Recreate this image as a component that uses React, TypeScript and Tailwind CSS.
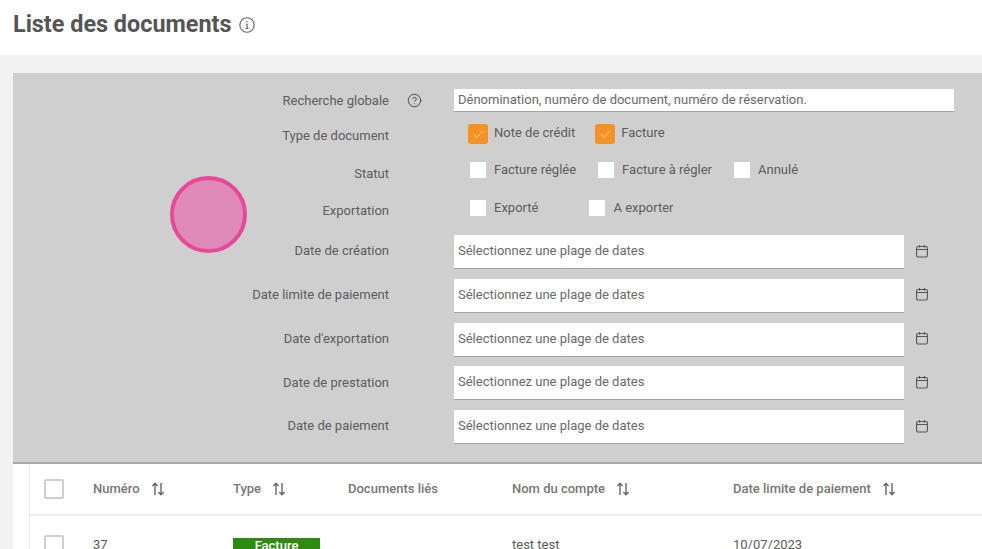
import { CircleHelp, Check } from "lucide-react";

const DATE_ROWS = [
  "Date de création",
  "Date limite de paiement",
  "Date d'exportation",
  "Date de prestation",
  "Date de paiement",
];

function SortIcon() {
  return (
    <svg width="14" height="14" viewBox="0 0 14 14" fill="none" stroke="#666" strokeWidth="1.4">
      <path d="M4 13V1.5M1.4 4L4 1.3 6.6 4" />
      <path d="M10 1v11.5M7.4 10L10 12.7 12.6 10" />
    </svg>
  );
}

function CalIcon() {
  return (
    <svg width="12" height="14" viewBox="0 0 12 14" fill="none" stroke="#555" strokeWidth="1.1" className="ml-[12px] -mt-[3px]">
      <rect x="0.6" y="2.5" width="10.8" height="10.5" rx="1.5" />
      <path d="M0.6 5.5h10.8M3.5 1v2.5M8.5 1v2.5" />
    </svg>
  );
}

function InfoIcon() {
  return (
    <svg width="16" height="16" viewBox="0 0 16 16" fill="none" stroke="#666" strokeWidth="1.1" className="ml-2">
      <circle cx="8" cy="8" r="7.2" />
      <path d="M6.8 7.2H8.1V11.4M6.7 11.4H9.4" />
      <path d="M7.4 4.6h1.2" strokeWidth="1.4" />
    </svg>
  );
}

function Orange({ label, className }: { label: string; className?: string }) {
  return (
    <div className={"flex items-center " + (className ?? "")}>
      <span className="w-5 h-5 rounded-[3px] bg-[#f39325] flex items-center justify-center mr-[6px]">
        <Check size={13} strokeWidth={1} color="#ffffff" />
      </span>
      <span className="-mt-[2px]">{label}</span>
    </div>
  );
}

function Box({ label, className }: { label: string; className?: string }) {
  return (
    <div className={"flex items-center " + (className ?? "")}>
      <span className="w-4 h-4 bg-white mr-2" />
      <span>{label}</span>
    </div>
  );
}

function FieldLabel({ children, className }: { children: string; className?: string }) {
  return <div className={"w-[376px] shrink-0 text-right text-[13px] text-[#5c5c5c] " + (className ?? "")}>{children}</div>;
}

function Th({ label, w, sort }: { label: string; w: string; sort?: boolean }) {
  return (
    <div className={"flex items-center shrink-0 font-medium text-[13px] text-[#777] " + w}>
      {label}
      {sort && <span className="ml-[11px] flex"><SortIcon /></span>}
    </div>
  );
}

export default function App() {
  return (
    <div className="h-[549px] w-[982px] overflow-hidden bg-[#f2f2f2] font-['Roboto',sans-serif] relative">
      <header className="h-[55px] bg-white flex items-center pl-[13px] pb-[6px]">
        <h1 className="text-[23.4px] font-bold text-[#555]">Liste des documents</h1>
        <InfoIcon />
      </header>

      <div className="mt-[18px] ml-[13px]">
        <section className="h-[391px] bg-[#cfcfcf] border-b-2 border-[#a9a9a9] pt-4">
          <div className="flex items-center h-[23px]">
            <FieldLabel>Recherche globale</FieldLabel>
            <CircleHelp size={15} strokeWidth={1.5} color="#444" className="ml-[18px] mr-[32px]" />
            <div className="w-[500px] h-[23px] bg-white border-b border-[#a5a5a5] pl-1 text-[13px] leading-[21px] text-[#6a6a6a]">
              Dénomination, numéro de document, numéro de réservation.
            </div>
          </div>

          <div className="flex items-center h-5 mt-[14px] text-[13px] text-[#5c5c5c]">
            <FieldLabel>Type de document</FieldLabel>
            <div className="flex items-center ml-[79px] -mt-[4px]">
              <Orange label="Note de crédit" />
              <Orange label="Facture" className="ml-5" />
            </div>
          </div>

          <div className="flex items-center h-4 mt-[20px] text-[13px] text-[#5c5c5c]">
            <FieldLabel>Statut</FieldLabel>
            <div className="flex items-center ml-[81px] -mt-[8px]">
              <Box label="Facture réglée" />
              <Box label="Facture à régler" className="ml-[22px]" />
              <Box label="Annulé" className="ml-[22px]" />
            </div>
          </div>

          <div className="flex items-center h-4 mt-[21px] text-[13px] text-[#5c5c5c]">
            <FieldLabel>Exportation</FieldLabel>
            <div className="flex items-center ml-[81px] -mt-[6px]">
              <Box label="Exporté" />
              <Box label="A exporter" className="ml-[51px]" />
            </div>
          </div>

          <div className="flex flex-col gap-[9.75px] mt-[16px]">
            {DATE_ROWS.map((label) => (
              <div key={label} className="flex items-center h-[34px]">
                <FieldLabel className="-mt-[2px]">{label}</FieldLabel>
                <div className="ml-[65px] w-[450px] h-[34px] bg-white border-b border-[#a5a5a5] pl-1 text-[13px] leading-[31px] text-[#6a6a6a]">
                  Sélectionnez une plage de dates
                </div>
                <CalIcon />
              </div>
            ))}
          </div>
        </section>

        <div className="bg-white h-[90px] pl-4">
          <div className="border-l border-[#e8e8e8] h-full">
            <div className="flex items-center h-[52px] border-b-2 border-[#eeeeee]">
              <span className="ml-[14px] w-5 h-5 rounded-[2px] border-2 border-[#cfcfcf] shrink-0 mr-[29px]" />
              <Th label="Numéro" w="w-[140px]" sort />
              <Th label="Type" w="w-[115px]" sort />
              <Th label="Documents liés" w="w-[164px]" />
              <Th label="Nom du compte" w="w-[221px]" sort />
              <Th label="Date limite de paiement" w="w-[200px]" sort />
            </div>
            <div className="flex items-start pt-[19px] text-[13px] text-[#5c5c5c]">
              <span className="ml-[14px] w-5 h-5 rounded-[2px] border-2 border-[#cfcfcf] shrink-0 mr-[29px]" />
              <div className="w-[140px] shrink-0 leading-[20px]">37</div>
              <div className="w-[115px] shrink-0 pt-[3px]">
                <span className="block w-[87px] h-[18px] bg-[#2f8a12] text-white text-center font-medium text-[13px] leading-[16px]">Facture</span>
              </div>
              <div className="w-[164px] shrink-0" />
              <div className="w-[221px] shrink-0 leading-[20px]">test test</div>
              <div className="w-[200px] shrink-0 leading-[20px]">10/07/2023</div>
            </div>
          </div>
        </div>
      </div>

      <div className="absolute left-[170px] top-[176px] w-[77px] h-[77px] rounded-full bg-[#e08ab8] border-4 border-[#e8489a]" />
    </div>
  );
}
